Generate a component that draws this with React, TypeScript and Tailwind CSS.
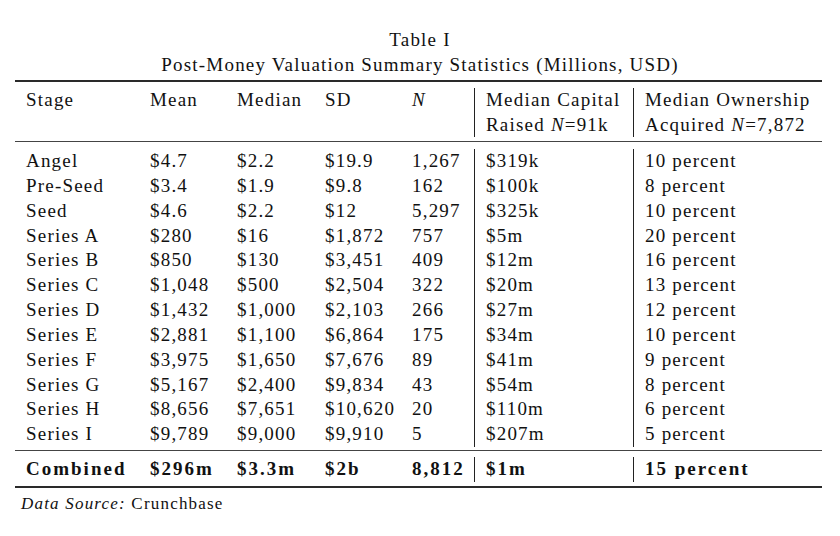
import React from "react";

// Table I — post-money valuation summary stats, typeset like a LaTeX booktabs table.
const ROWS: [string, string, string, string, string, string, string][] = [
  ["Angel", "$4.7", "$2.2", "$19.9", "1,267", "$319k", "10 percent"],
  ["Pre-Seed", "$3.4", "$1.9", "$9.8", "162", "$100k", "8 percent"],
  ["Seed", "$4.6", "$2.2", "$12", "5,297", "$325k", "10 percent"],
  ["Series A", "$280", "$16", "$1,872", "757", "$5m", "20 percent"],
  ["Series B", "$850", "$130", "$3,451", "409", "$12m", "16 percent"],
  ["Series C", "$1,048", "$500", "$2,504", "322", "$20m", "13 percent"],
  ["Series D", "$1,432", "$1,000", "$2,103", "266", "$27m", "12 percent"],
  ["Series E", "$2,881", "$1,100", "$6,864", "175", "$34m", "10 percent"],
  ["Series F", "$3,975", "$1,650", "$7,676", "89", "$41m", "9 percent"],
  ["Series G", "$5,167", "$2,400", "$9,834", "43", "$54m", "8 percent"],
  ["Series H", "$8,656", "$7,651", "$10,620", "20", "$110m", "6 percent"],
  ["Series I", "$9,789", "$9,000", "$9,910", "5", "$207m", "5 percent"],
];

const COMBINED = ["Combined", "$296m", "$3.3m", "$2b", "8,812", "$1m", "15 percent"];

const GRID = "grid grid-cols-[124px_87px_88px_87px_74px_159px_188px]";

function Section({ children }: { children: React.ReactNode[] }) {
  return (
    <div className={GRID}>
      <div className="pl-[11px]">{children[0]}</div>
      <div className="pl-[11px]">{children[1]}</div>
      <div className="pl-[11px]">{children[2]}</div>
      <div className="pl-[11px]">{children[3]}</div>
      <div className="pl-[11px] border-r border-[#222]">{children[4]}</div>
      <div className="pl-[11px] border-r border-[#222]">{children[5]}</div>
      <div className="pl-[11px]">{children[6]}</div>
    </div>
  );
}

const col = (rows: string[][], i: number) =>
  rows.map((r, k) => (
    <div key={k} className="h-[24.85px] leading-[23.5px] whitespace-nowrap">
      {r[i]}
    </div>
  ));

export default function App() {
  return (
    <div
      className="w-[840px] h-[536px] bg-white text-[#111] text-[19px] tracking-[1.2px] pt-[27px]"
      style={{ fontFamily: '"Liberation Serif", serif' }}
    >
      <div className="text-center leading-[25px]">Table I</div>
      <div className="text-center leading-[25px]">
        Post-Money Valuation Summary Statistics (Millions, USD)
      </div>

      <div className="ml-[15px] w-[807px] mt-[3px]">
        <div className="h-[2px] bg-[#2a2a2a]" />
        <div className="mt-[6px]">
          <Section>
            {[
              <div className="h-[49px] leading-[24px]">Stage</div>,
              <div className="leading-[24px]">Mean</div>,
              <div className="leading-[24px]">Median</div>,
              <div className="leading-[24px]">SD</div>,
              <div className="leading-[24px] italic">N</div>,
              <div className="leading-[24.5px] whitespace-nowrap">
                Median Capital
                <br />
                Raised <i>N</i>=91k
              </div>,
              <div className="leading-[24.5px] whitespace-nowrap">
                Median Ownership
                <br />
                Acquired <i>N</i>=7,872
              </div>,
            ]}
          </Section>
        </div>
        <div className="mt-[4px] h-px bg-[#444]" />
        <div className="mt-[7px]">
          <Section>{[0, 1, 2, 3, 4, 5, 6].map((i) => <div key={i}>{col(ROWS, i)}</div>)}</Section>
        </div>
        <div className="mt-[3px] h-px bg-[#444]" />
        <div className="mt-[6px] font-bold tracking-[2px]">
          <Section>
            {COMBINED.map((c, i) => (
              <div key={i} className="h-[25px] leading-[23px] whitespace-nowrap">
                {c}
              </div>
            ))}
          </Section>
        </div>
        <div className="mt-[4px] h-[2px] bg-[#2a2a2a]" />
      </div>

      <div className="ml-[21px] mt-[3px] text-[17px] leading-[25px]">
        <i>Data Source:</i> Crunchbase
      </div>
    </div>
  );
}
